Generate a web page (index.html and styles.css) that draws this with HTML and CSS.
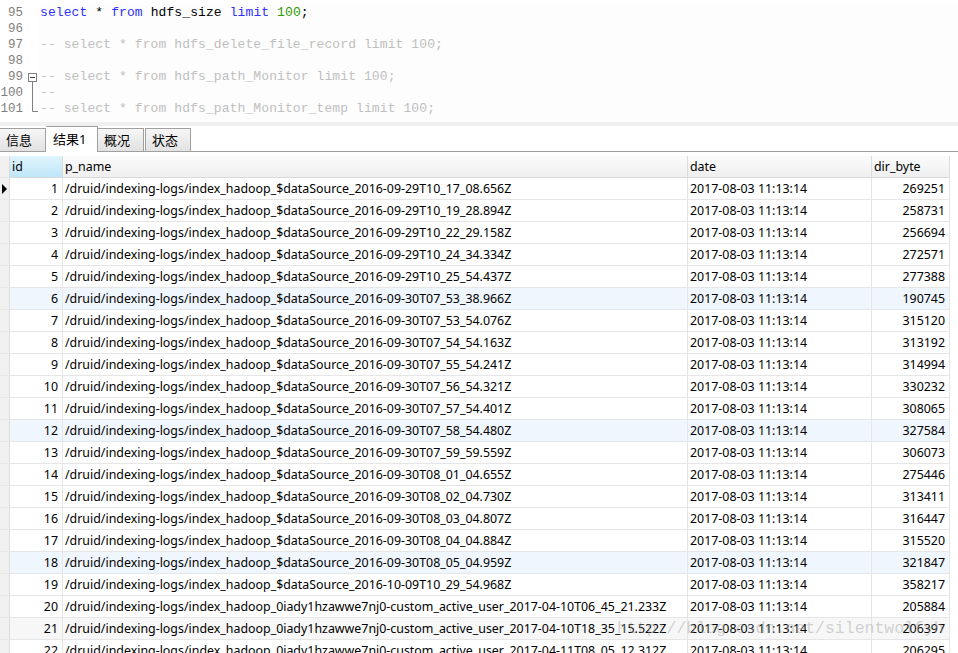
FILE: index.html
```html
<!DOCTYPE html>
<html>
<head>
<meta charset="utf-8">
<link rel="stylesheet" href="styles.css">
</head>
<body>
<div class="editor">
  <div class="gutter">
    <div class="ln"><span class="lnum">95</span><span class="fold"></span></div>
    <div class="ln"><span class="lnum">96</span><span class="fold"></span></div>
    <div class="ln"><span class="lnum">97</span><span class="fold"></span></div>
    <div class="ln"><span class="lnum">98</span><span class="fold"></span></div>
    <div class="ln"><span class="lnum">99</span><span class="fold"><svg width="12" height="16" viewBox="0 0 12 16"><rect x="1.5" y="4.5" width="8" height="8" fill="#fff" stroke="#808080"/><line x1="3" y1="8.5" x2="8" y2="8.5" stroke="#404040"/><line x1="5.5" y1="12.5" x2="5.5" y2="16" stroke="#808080"/></svg></span></div>
    <div class="ln"><span class="lnum">100</span><span class="fold"><svg width="12" height="16" viewBox="0 0 12 16"><line x1="5.5" y1="0" x2="5.5" y2="16" stroke="#808080"/></svg></span></div>
    <div class="ln"><span class="lnum">101</span><span class="fold"><svg width="12" height="16" viewBox="0 0 12 16"><path d="M5.5 0 V10.5 H11" fill="none" stroke="#808080"/></svg></span></div>
  </div>
  <div class="code">
    <div class="cl"><span class="kw">select</span> * <span class="kw">from</span> hdfs_size <span class="kw">limit</span> <span class="nu">100</span>;</div>
    <div class="cl"></div>
    <div class="cl cm">-- select * from hdfs_delete_file_record limit 100;</div>
    <div class="cl"></div>
    <div class="cl cm">-- select * from hdfs_path_Monitor limit 100;</div>
    <div class="cl cm">--</div>
    <div class="cl cm">-- select * from hdfs_path_Monitor_temp limit 100;</div>
  </div>
</div>
<div class="band"></div>
<div class="tabs">
  <div class="tab t1">信息</div>
  <div class="tab active">结果1</div>
  <div class="tab t3">概况</div>
  <div class="tab t4">状态</div>
</div>
<div class="grid">
  <div class="row head">
    <div class="c ind"></div><div class="c id sel">id</div><div class="c">p_name</div><div class="c">date</div><div class="c">dir_byte</div>
  </div>
  <div class="row"><div class="c ind"><span class="arrow"></span></div><div class="c id">1</div><div class="c">/druid/indexing-logs/index_hadoop_$dataSource_2016-09-29T10_17_08.656Z</div><div class="c">2017-08-03 11:13:14</div><div class="c val">269251</div></div>
  <div class="row"><div class="c ind"></div><div class="c id">2</div><div class="c">/druid/indexing-logs/index_hadoop_$dataSource_2016-09-29T10_19_28.894Z</div><div class="c">2017-08-03 11:13:14</div><div class="c val">258731</div></div>
  <div class="row"><div class="c ind"></div><div class="c id">3</div><div class="c">/druid/indexing-logs/index_hadoop_$dataSource_2016-09-29T10_22_29.158Z</div><div class="c">2017-08-03 11:13:14</div><div class="c val">256694</div></div>
  <div class="row"><div class="c ind"></div><div class="c id">4</div><div class="c">/druid/indexing-logs/index_hadoop_$dataSource_2016-09-29T10_24_34.334Z</div><div class="c">2017-08-03 11:13:14</div><div class="c val">272571</div></div>
  <div class="row"><div class="c ind"></div><div class="c id">5</div><div class="c">/druid/indexing-logs/index_hadoop_$dataSource_2016-09-29T10_25_54.437Z</div><div class="c">2017-08-03 11:13:14</div><div class="c val">277388</div></div>
  <div class="row hl"><div class="c ind"></div><div class="c id">6</div><div class="c">/druid/indexing-logs/index_hadoop_$dataSource_2016-09-30T07_53_38.966Z</div><div class="c">2017-08-03 11:13:14</div><div class="c val">190745</div></div>
  <div class="row"><div class="c ind"></div><div class="c id">7</div><div class="c">/druid/indexing-logs/index_hadoop_$dataSource_2016-09-30T07_53_54.076Z</div><div class="c">2017-08-03 11:13:14</div><div class="c val">315120</div></div>
  <div class="row"><div class="c ind"></div><div class="c id">8</div><div class="c">/druid/indexing-logs/index_hadoop_$dataSource_2016-09-30T07_54_54.163Z</div><div class="c">2017-08-03 11:13:14</div><div class="c val">313192</div></div>
  <div class="row"><div class="c ind"></div><div class="c id">9</div><div class="c">/druid/indexing-logs/index_hadoop_$dataSource_2016-09-30T07_55_54.241Z</div><div class="c">2017-08-03 11:13:14</div><div class="c val">314994</div></div>
  <div class="row"><div class="c ind"></div><div class="c id">10</div><div class="c">/druid/indexing-logs/index_hadoop_$dataSource_2016-09-30T07_56_54.321Z</div><div class="c">2017-08-03 11:13:14</div><div class="c val">330232</div></div>
  <div class="row"><div class="c ind"></div><div class="c id">11</div><div class="c">/druid/indexing-logs/index_hadoop_$dataSource_2016-09-30T07_57_54.401Z</div><div class="c">2017-08-03 11:13:14</div><div class="c val">308065</div></div>
  <div class="row hl"><div class="c ind"></div><div class="c id">12</div><div class="c">/druid/indexing-logs/index_hadoop_$dataSource_2016-09-30T07_58_54.480Z</div><div class="c">2017-08-03 11:13:14</div><div class="c val">327584</div></div>
  <div class="row"><div class="c ind"></div><div class="c id">13</div><div class="c">/druid/indexing-logs/index_hadoop_$dataSource_2016-09-30T07_59_59.559Z</div><div class="c">2017-08-03 11:13:14</div><div class="c val">306073</div></div>
  <div class="row"><div class="c ind"></div><div class="c id">14</div><div class="c">/druid/indexing-logs/index_hadoop_$dataSource_2016-09-30T08_01_04.655Z</div><div class="c">2017-08-03 11:13:14</div><div class="c val">275446</div></div>
  <div class="row"><div class="c ind"></div><div class="c id">15</div><div class="c">/druid/indexing-logs/index_hadoop_$dataSource_2016-09-30T08_02_04.730Z</div><div class="c">2017-08-03 11:13:14</div><div class="c val">313411</div></div>
  <div class="row"><div class="c ind"></div><div class="c id">16</div><div class="c">/druid/indexing-logs/index_hadoop_$dataSource_2016-09-30T08_03_04.807Z</div><div class="c">2017-08-03 11:13:14</div><div class="c val">316447</div></div>
  <div class="row"><div class="c ind"></div><div class="c id">17</div><div class="c">/druid/indexing-logs/index_hadoop_$dataSource_2016-09-30T08_04_04.884Z</div><div class="c">2017-08-03 11:13:14</div><div class="c val">315520</div></div>
  <div class="row hl"><div class="c ind"></div><div class="c id">18</div><div class="c">/druid/indexing-logs/index_hadoop_$dataSource_2016-09-30T08_05_04.959Z</div><div class="c">2017-08-03 11:13:14</div><div class="c val">321847</div></div>
  <div class="row"><div class="c ind"></div><div class="c id">19</div><div class="c">/druid/indexing-logs/index_hadoop_$dataSource_2016-10-09T10_29_54.968Z</div><div class="c">2017-08-03 11:13:14</div><div class="c val">358217</div></div>
  <div class="row"><div class="c ind"></div><div class="c id">20</div><div class="c">/druid/indexing-logs/index_hadoop_0iady1hzawwe7nj0-custom_active_user_2017-04-10T06_45_21.233Z</div><div class="c">2017-08-03 11:13:14</div><div class="c val">205884</div></div>
  <div class="row gr"><div class="c ind"></div><div class="c id">21</div><div class="c">/druid/indexing-logs/index_hadoop_0iady1hzawwe7nj0-custom_active_user_2017-04-10T18_35_15.522Z</div><div class="c">2017-08-03 11:13:14</div><div class="c val">206397</div></div>
  <div class="row"><div class="c ind"></div><div class="c id">22</div><div class="c">/druid/indexing-logs/index_hadoop_0iady1hzawwe7nj0-custom_active_user_2017-04-11T08_05_12.312Z</div><div class="c">2017-08-03 11:13:14</div><div class="c val">206295</div></div>
</div>
<div class="watermark">http://blog.csdn.net/silentwolfyh</div>
</body>
</html>
```
FILE: styles.css
```css
html, body {
  margin: 0;
  padding: 0;
  background: #fff;
  overflow: hidden;
  width: 958px;
  height: 653px;
}
body {
  position: relative;
  font-family: "Noto Sans", "Noto Sans CJK SC", sans-serif;
}
.editor {
  display: flex;
  height: 122px;
  box-sizing: border-box;
  padding-top: 5px;
  background: #fff;
}
.gutter {
  width: 39px;
  flex: none;
}
.ln {
  display: flex;
  height: 16px;
}
.lnum {
  flex: none;
  width: 23px;
  text-align: right;
  font-family: "Liberation Mono", monospace;
  font-size: 12.5px;
  line-height: 16px;
  color: #808080;
}
.fold {
  flex: none;
  width: 12px;
  margin-left: 4px;
  height: 16px;
}
.fold svg { display: block; }
.code {
  flex: 1;
  padding-left: 1px;
  background: #fdfdfd;
}
.cl {
  height: 16px;
  line-height: 16px;
  font-family: "Liberation Mono", monospace;
  font-size: 13px;
  letter-spacing: 0.1px;
  color: #000;
  white-space: pre;
}
.kw { color: #2f2fff; }
.nu { color: #2e9a00; }
.cm { color: #c0c0c0; }
.band {
  height: 4px;
  background: #f0f0f0;
}
.tabs {
  display: flex;
  align-items: flex-end;
  height: 25px;
  border-bottom: 1px solid #a0a0a0;
  box-sizing: content-box;
}
.tab {
  box-sizing: border-box;
  height: 23px;
  border: 1px solid #a0a0a0;
  border-bottom: none;
  background: linear-gradient(#f6f6f6, #e2e2e2);
  font-size: 13px;
  line-height: 22px;
  padding-left: 6px;
  color: #000;
}
.t1 { width: 46px; border-left: none; }
.active {
  width: 52px;
  height: 26px;
  margin-bottom: -1px;
  background: #fff;
  line-height: 24px;
  padding-left: 7px;
  border-left: none;
}
.t3 { width: 46px; border-left: none; }
.t4 { width: 46px; margin-left: 1px; }
.grid {
  margin-top: 4px;
}
.row {
  display: grid;
  grid-template-columns: 10px 53px 625px 184px 78px;
  height: 22px;
}
.c {
  box-sizing: border-box;
  border-right: 1px solid #e6e6e6;
  border-bottom: 1px solid #e6e6e6;
  font-size: 12.4px;
  line-height: 21px;
  padding-left: 2px;
  white-space: nowrap;
  overflow: hidden;
  color: #000;
}
.head .c {
  background: linear-gradient(#fbfbfb, #efefef);
  border-right-color: #dcdcdc;
  border-bottom-color: #d9d9d9;
}
.head .c.sel {
  background: linear-gradient(#dff4fd, #bfe6f8);
}
.c.id {
  text-align: right;
  padding-right: 4px;
}
.head .c.id { text-align: left; padding-left: 2px; }
.c.val {
  text-align: right;
  padding-right: 4px;
}
.c.ind {
  background: #f1f1f1;
  border-right: 1px solid #dcdcdc;
  border-bottom: 1px solid #e9e9e9;
  padding: 0;
}
.arrow {
  display: block;
  width: 0;
  height: 0;
  margin: 6px 0 0 2px;
  border-top: 5px solid transparent;
  border-bottom: 5px solid transparent;
  border-left: 5px solid #000;
}
.hl .c:not(.ind) { background: #f0f6fd; }
.gr .c:not(.ind) { background: #f7f7f7; }
.watermark {
  position: absolute;
  left: 617px;
  top: 617px;
  font-family: "Liberation Mono", monospace;
  font-size: 16.5px;
  line-height: 24px;
  color: rgba(160, 160, 160, 0.45);
  white-space: nowrap;
  pointer-events: none;
}
```
